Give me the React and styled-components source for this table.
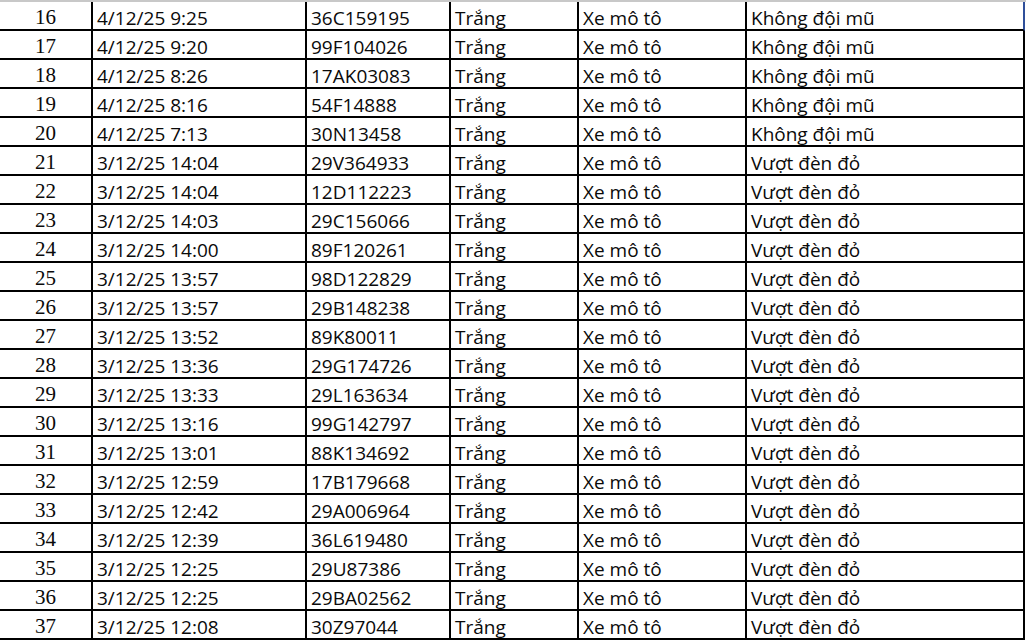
import React from 'react';
import styled, { createGlobalStyle } from 'styled-components';

const GlobalStyle = createGlobalStyle`
	html, body {
		margin: 0;
		padding: 0;
		background: #fff;
		overflow: hidden;
	}
`;

const Page = styled.div`
	width: 1026px;
	height: 641px;
	overflow: hidden;
	background: #fff;
`;

const TopBand = styled.div`
	height: 2px;
	background: #c8c8c8;
`;

const Sheet = styled.div`
	display: grid;
	grid-template-columns: 93px 214px 144px 128px 168px 278px;
	width: 1025px;
`;

const Cell = styled.div`
	box-sizing: border-box;
	height: 29px;
	padding: 5px 0 0 4px;
	border-right: 2px solid ${(props) => (props.highlight ? '#2f4f9a' : '#000')};
	border-bottom: 2px solid #000;
	font-family: 'Open Sans', 'Liberation Sans', sans-serif;
	font-size: 19px;
	line-height: 22px;
	color: #0a0a0a;
	white-space: nowrap;
	overflow: hidden;
`;

const IndexCell = styled(Cell)`
	padding: 4px 0 0 0;
	text-align: center;
	font-family: 'Liberation Serif', 'DejaVu Serif', serif;
	font-size: 21px;
	line-height: 23px;
`;

const rows = [
	[16, '4/12/25 9:25', '36C159195'],
	[17, '4/12/25 9:20', '99F104026'],
	[18, '4/12/25 8:26', '17AK03083'],
	[19, '4/12/25 8:16', '54F14888'],
	[20, '4/12/25 7:13', '30N13458'],
	[21, '3/12/25 14:04', '29V364933'],
	[22, '3/12/25 14:04', '12D112223'],
	[23, '3/12/25 14:03', '29C156066'],
	[24, '3/12/25 14:00', '89F120261'],
	[25, '3/12/25 13:57', '98D122829'],
	[26, '3/12/25 13:57', '29B148238'],
	[27, '3/12/25 13:52', '89K80011'],
	[28, '3/12/25 13:36', '29G174726'],
	[29, '3/12/25 13:33', '29L163634'],
	[30, '3/12/25 13:16', '99G142797'],
	[31, '3/12/25 13:01', '88K134692'],
	[32, '3/12/25 12:59', '17B179668'],
	[33, '3/12/25 12:42', '29A006964'],
	[34, '3/12/25 12:39', '36L619480'],
	[35, '3/12/25 12:25', '29U87386'],
	[36, '3/12/25 12:25', '29BA02562'],
	[37, '3/12/25 12:08', '30Z97044'],
];

const App = () => (
	<Page>
		<GlobalStyle />
		<TopBand />
		<Sheet>
			{rows.map(([no, time, plate], i) => (
				<React.Fragment key={no}>
					<IndexCell>{no}</IndexCell>
					<Cell>{time}</Cell>
					<Cell>{plate}</Cell>
					<Cell>Trắng</Cell>
					<Cell>Xe mô tô</Cell>
					<Cell highlight={i === 0}>{no <= 20 ? 'Không đội mũ' : 'Vượt đèn đỏ'}</Cell>
				</React.Fragment>
			))}
		</Sheet>
	</Page>
);

export default App;
